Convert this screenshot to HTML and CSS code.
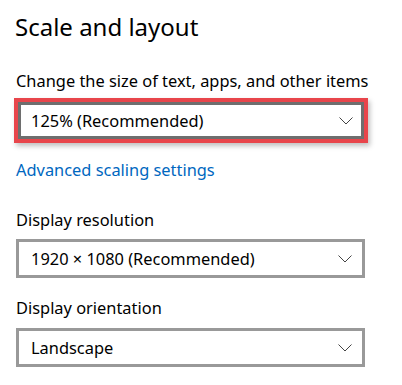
FILE: index.html
```html
<!DOCTYPE html>
<html lang="en">
<head>
    <meta charset="UTF-8" />
    <title>Scale and layout</title>
    <link rel="stylesheet" href="styles.css">
</head>
<body>
<div class="page">
    <h1 class="title">Scale and layout</h1>

    <div class="setting">
        <div class="label">Change the size of text, apps, and other items</div>
        <div class="highlight">
            <div class="combo combo-focus">
                <span>125% (Recommended)</span>
                <svg class="chevron" width="14" height="8" viewBox="0 0 14 8"><polyline points="0.5,0.5 7,7 13.5,0.5" /></svg>
            </div>
        </div>
    </div>

    <a class="link" href="#">Advanced scaling settings</a>

    <div class="setting">
        <div class="label">Display resolution</div>
        <div class="combo">
            <span>1920 × 1080 (Recommended)</span>
            <svg class="chevron" width="14" height="8" viewBox="0 0 14 8"><polyline points="0.5,0.5 7,7 13.5,0.5" /></svg>
        </div>
    </div>

    <div class="setting">
        <div class="label">Display orientation</div>
        <div class="combo">
            <span>Landscape</span>
            <svg class="chevron" width="14" height="8" viewBox="0 0 14 8"><polyline points="0.5,0.5 7,7 13.5,0.5" /></svg>
        </div>
    </div>
</div>
</body>
</html>
```

FILE: styles.css
```css
:root {
    --text-color: #000;
    --link-color: #0067c0;
    --combo-border: #999;
    --focus-border: #6e6e6e;
    --highlight: #e8454b;
}

* {
    box-sizing: border-box;
    margin: 0;
    padding: 0;
}

body {
    background: #fff;
    color: var(--text-color);
    font-family: 'Noto Sans', 'Open Sans', sans-serif;
}

.page {
    width: 402px;
    padding: 11px 0 0 16px;
    display: flex;
    flex-direction: column;
    align-items: flex-start;
}

.title {
    font-size: 24px;
    font-weight: 400;
    line-height: 32px;
    margin-left: -1px;
}

.setting {
    display: flex;
    flex-direction: column;
    align-items: flex-start;
}

.label {
    font-size: 16.4px;
    line-height: 20px;
}

.setting:first-of-type {
    margin-top: 28px;
}

.combo {
    width: 349px;
    height: 39px;
    border: 3px solid var(--combo-border);
    display: flex;
    align-items: center;
    justify-content: space-between;
    padding: 0 10px 0 12px;
    font-size: 16.4px;
    margin-top: 9px;
}

.highlight {
    margin: 7px 0 0 -2px;
    border: 4px solid var(--highlight);
    box-shadow: 2px 3px 5px rgba(0, 0, 0, 0.25);
}

.combo-focus {
    width: 346px;
    height: 37px;
    margin-top: 0;
    border-color: var(--focus-border);
    padding-left: 10px;
    padding-right: 8px;
}

.chevron polyline {
    fill: none;
    stroke: #444;
    stroke-width: 1;
}

.link {
    margin-top: 17px;
    color: var(--link-color);
    text-decoration: none;
    font-size: 16.4px;
    line-height: 20px;
}

.link + .setting {
    margin-top: 30px;
}

.setting + .setting {
    margin-top: 20px;
}

.setting + .setting .combo {
    margin-top: 10px;
}
```
